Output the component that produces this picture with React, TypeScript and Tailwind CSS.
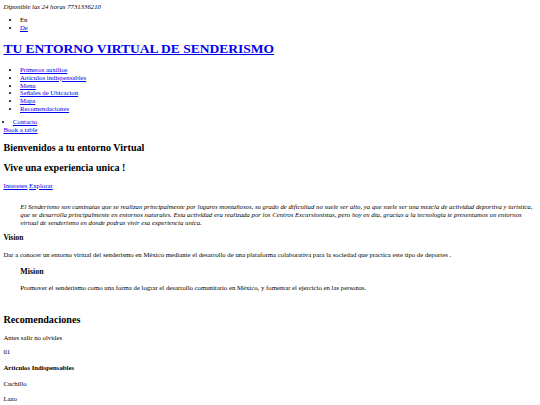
const NAV = [
  "Primeros auxilios",
  "Articulos indispensables",
  "Menu",
  "Señales de Ubicacion",
  "Mapa",
  "Recomendaciones",
];

const link = "text-[#0000ee] underline";

export default function App() {
  return (
    <div className="min-h-[405px] bg-white px-[3.4px] text-[6.75px] leading-[7.75px] text-black font-['Liberation_Serif',serif]">
      <p className="pt-[3.1px] italic">Diponible las 24 horas 7731336210</p>

      <ul className="mt-[5.2px] list-disc pl-[16.6px]">
        <li>En</li>
        <li>
          <a className={link}>De</a>
        </li>
      </ul>

      <h1 className="mt-[9.6px] text-[13.5px] leading-[15.5px] font-bold">
        <a className={link}>TU ENTORNO VIRTUAL DE SENDERISMO</a>
      </h1>

      <ul className="mt-[9.4px] list-disc pl-[16.6px]">
        {NAV.map((n) => (
          <li key={n}>
            <a className={link}>{n}</a>
          </li>
        ))}
      </ul>

      <ul className="mt-[5.5px] list-disc pl-[9.4px]">
        <li>
          <a className={link}>Contacto</a>
        </li>
      </ul>
      <a className={`block ${link}`}>Book a table</a>

      <h2 className="mt-[8.3px] text-[10.125px] leading-[11.65px] font-bold">Bienvenidos a tu entorno Virtual</h2>
      <h2 className="mt-[8.4px] text-[10.125px] leading-[11.65px] font-bold">Vive una experiencia unica !</h2>

      <p className="mt-[8.3px]">
        <a className={link}>Intereses</a> <a className={link}>Explorar</a>
      </p>

      <p className="mt-[13.1px] pl-[16.9px] pr-[4px] italic leading-[8px]">
        El Senderismo son caminatas que se realizan principalmente por lugares montañosos, su grado de dificultad no suele ser
        alto, ya que suele ser una mezcla de actividad deportiva y turistica, que se desarrolla principalmente en entornos
        naturales. Esta actividad era realizada por los Centros Excursionistas, pero hoy en día, gracias a la tecnologia te
        presentamos un entornos virtual de senderismo en donde podras vivir esa experiencia unica.
      </p>

      <h4 className="mt-[7.6px] text-[7.5px] leading-[8.6px] font-bold">Vision</h4>
      <p className="mt-[7.8px]">
        Dar a conocer un entorno virtual del senderismo en México mediante el desarrollo de una plataforma colaborativa para la
        sociedad que practica este tipo de deportes .
      </p>

      <div className="pl-[16.9px]">
        <h3 className="mt-[8.5px] text-[7.9px] leading-[9.1px] font-bold">Mision</h3>
        <p className="mt-[7.6px]">
          Promover el senderismo como una forma de lograr el desarrollo comunitario en México, y fomentar el ejercicio en las
          personas.
        </p>
      </div>

      <h2 className="mt-[22.3px] text-[10.125px] leading-[11.65px] font-bold">Recomendaciones</h2>
      <p className="mt-[8.3px]">Antes salir no olvides</p>
      <p className="mt-[6.2px]">01</p>
      <h4 className="mt-[9.2px] font-bold">Articulos Indispensables</h4>
      <p className="mt-[8.2px]">Cuchillo</p>
      <p className="mt-[7.2px]">Lazo</p>
    </div>
  );
}
